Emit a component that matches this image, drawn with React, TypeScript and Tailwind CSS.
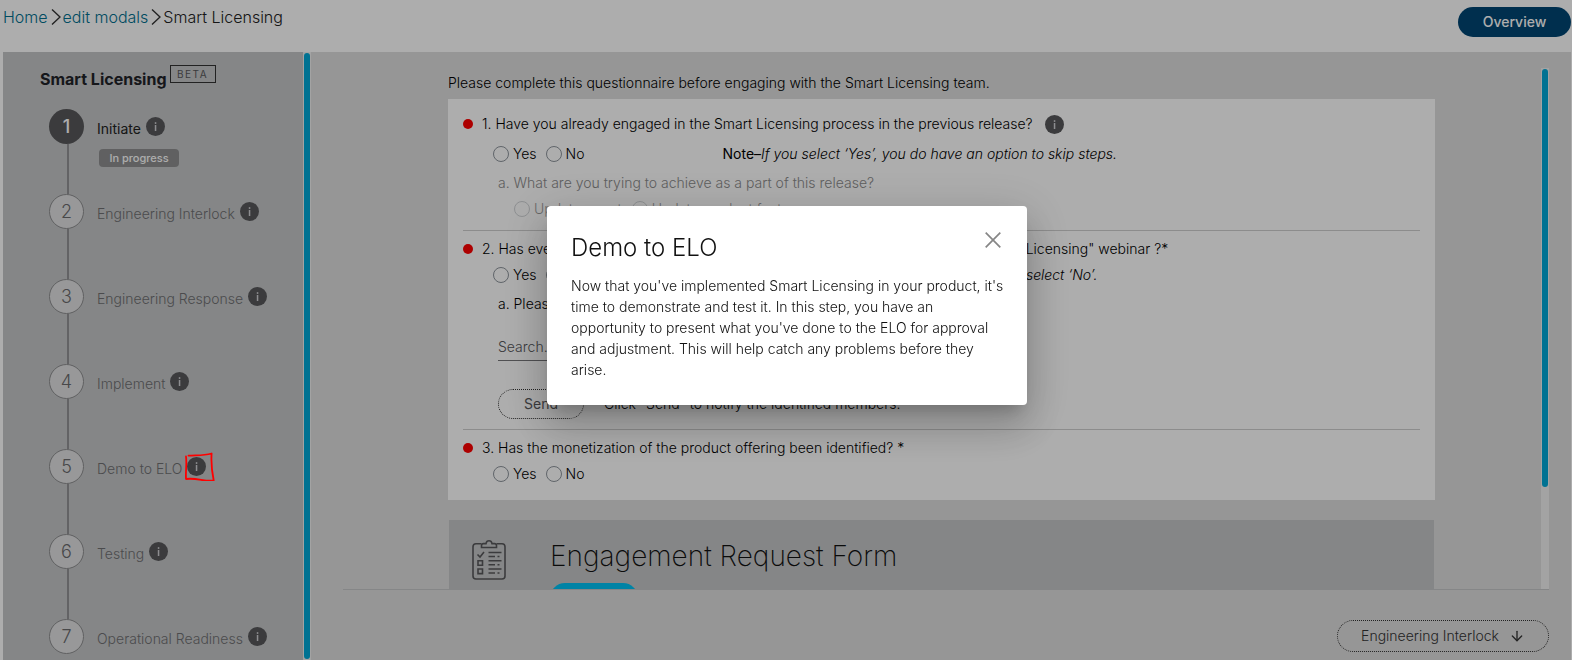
import { ReactNode } from "react";
import { ArrowDown } from "lucide-react";

const steps = [
  "Initiate",
  "Engineering Interlock",
  "Engineering Response",
  "Implement",
  "Demo to ELO",
  "Testing",
  "Operational Readiness",
];

function InfoButton({ label }: { label: string }) {
  return (
    <button type="button" aria-label={`About ${label}`} className="size-[19px] shrink-0 rounded-full">
      <svg viewBox="0 0 19 19" className="block size-full" aria-hidden="true">
        <circle cx="9.5" cy="9.5" r="9.5" fill="#58585b" />
        <rect x="8.8" y="5.2" width="1.5" height="1.7" fill="#d0d0d4" />
        <rect x="8.8" y="8" width="1.5" height="6" fill="#d0d0d4" />
      </svg>
    </button>
  );
}

function Chevron() {
  return (
    <svg viewBox="0 0 10 16" className="ml-[3px] mr-[2px] h-4 w-[10px]" aria-hidden="true">
      <path d="M1 0.5 9 8 1 15.5" fill="none" stroke="#333" strokeWidth="1.4" />
    </svg>
  );
}

function Radio({ name, label, disabled }: { name: string; label: string; disabled?: boolean }) {
  return (
    <label className={disabled ? "flex items-center gap-1 opacity-40" : "flex items-center gap-1"}>
      <input
        type="radio"
        name={name}
        disabled={disabled}
        className="size-4 appearance-none rounded-full border border-[#8e959c] checked:border-4"
      />
      {label}
    </label>
  );
}

function Question({ children }: { children: ReactNode }) {
  return (
    <div className="flex h-[26px] items-center">
      <span className="mr-[9px] size-[10px] rounded-full bg-[#ff0000]" />
      {children}
    </div>
  );
}

function Clipboard() {
  return (
    <svg viewBox="0 0 34 40" className="h-10 w-[34px]" fill="none" stroke="#58585b" strokeWidth="1.6" aria-hidden="true">
      <path d="M9.5 3.7H4a3 3 0 0 0-3 3V36a3 3 0 0 0 3 3h26a3 3 0 0 0 3-3V6.7a3 3 0 0 0-3-3h-5.5" />
      <path d="M9.5 7.5V5.5a2 2 0 0 1 2-1.9H14C14.3 1.8 15.4.8 17 .8s2.7 1 3 2.800h2.500a2 2 0 0 1 2 1.900v2z" />
      <path d="M5.500 14.500 8 17l4-5" />
      <path d="M16.500 12.500h13M16.500 16.500h6.500M25.500 16.500h2M16.500 20.800h13M16.500 24.800h6.500M25.500 24.800h2M16.500 29h13M16.500 33h6.500M25.500 33h2" />
      <path d="M6 20.700h4.500v4.600H6zM6 29h4.500v4.600H6z" />
    </svg>
  );
}

export default function App() {
  return (
    <div className="relative flex h-screen flex-col overflow-hidden bg-white font-['Inter',sans-serif] text-[14px] leading-5 text-black">
      <header className="flex h-[52px] shrink-0 items-start justify-between pl-[3px] pr-px">
        <nav aria-label="Breadcrumb" className="flex h-[34px] items-center text-[16px] font-light text-[#222]">
          <a href="#home" className="text-[#007090]">Home</a>
          <Chevron />
          <a href="#modals" className="text-[#007090]">edit modals</a>
          <Chevron />
          <span>Smart Licensing</span>
        </nav>
        <button type="button" className="mt-[7px] h-[30px] w-[113px] rounded-full bg-[#004674] font-medium text-white">
          Overview
        </button>
      </header>

      <div className="flex min-h-0 flex-1 pl-[3px] pr-px">
        <aside className="flex w-[300px] shrink-0 flex-col overflow-hidden bg-[#c4c6c7] pl-[37px] pt-[13px]">
          <div className="flex h-11 shrink-0 gap-[3px]">
            <h1 className="pt-1 text-[16px] font-bold text-[#1f2328]">Smart Licensing</h1>
            <span className="flex h-[18px] w-[46px] items-center justify-center border border-[#333] text-[10px] tracking-[1.5px] text-[#58585b]">
              BETA
            </span>
          </div>
          <ol className="pl-[9px]">
            {steps.map((step, i) => (
              <li key={step} className="flex h-[85px] gap-[13px]">
                <div className="flex w-[35px] flex-col items-center">
                  <span
                    className={
                      i === 0
                        ? "flex size-[35px] shrink-0 items-center justify-center rounded-full bg-[#58585b] text-[18px] font-medium text-white"
                        : "flex size-[35px] shrink-0 items-center justify-center rounded-full border border-[#8e8e90] bg-[#e0e1e2] text-[18px] font-light text-[#6a6a6d]"
                    }
                  >
                    {i + 1}
                  </span>
                  {i < steps.length - 1 && <span className="ml-[2px] w-[2px] flex-1 bg-[#929295]" />}
                </div>
                <div>
                  <div className="flex gap-[5px] pt-2">
                    <span className={i === 0 ? "pt-[2px] text-[#222]" : "pt-[2px] font-light text-[#6f6f72]"}>{step}</span>
                    <InfoButton label={step} />
                  </div>
                  {i === 0 && (
                    <span className="ml-[2px] mt-[10px] flex h-[18px] w-20 items-center justify-center rounded bg-[#8e8e90] text-[11px] font-medium text-white">
                      In progress
                    </span>
                  )}
                </div>
              </li>
            ))}
          </ol>
        </aside>
        <div className="w-2 shrink-0 bg-[#f1f1f1] p-px">
          <div className="h-full rounded-full bg-[#00a9d7]" />
        </div>

        <main className="flex min-w-0 flex-1 flex-col bg-[#dedede] pl-8 pr-[22px] pt-4 font-light">
          <div className="flex h-[522px] shrink-0 border-b border-[#c4c6c7]">
            <div className="min-w-0 flex-1 overflow-hidden pl-[105px] pr-[106px]">
              <p className="h-[31px] pt-[5px]">
                Please complete this questionnaire before engaging with the Smart Licensing team.
              </p>
              <section className="bg-white px-[15px] pb-[13px] pt-3">
                <Question>
                  <span className="mr-3">1. Have you already engaged in the Smart Licensing process in the previous release?</span>
                  <InfoButton label="the previous release" />
                </Question>
                <div className="flex h-[34px] items-center gap-[9px] pl-[30px]">
                  <Radio name="engaged" label="Yes" />
                  <Radio name="engaged" label="No" />
                  <p className="ml-[129px]">
                    <b>Note–</b>
                    <i>If you select ‘Yes’, you do have an option to skip steps.</i>
                  </p>
                </div>
                <p className="flex h-6 items-center pl-[35px] text-[#8c8c8c]">
                  a. What are you trying to achieve as a part of this release?
                </p>
                <div className="flex h-7 items-center gap-[10px] pl-[51px]">
                  <Radio name="goal" label="Update agent" disabled />
                  <Radio name="goal" label="Update product features" disabled />
                </div>
                <hr className="mt-[7px] border-[#cfcfcf]" />
                <div className="pt-[5px]">
                  <Question>
                    2. Has everyone on your engineering team viewed the "Introduction to Cisco Smart Licensing" webinar ?*
                  </Question>
                </div>
                <div className="flex h-[26px] items-center gap-[9px] pl-[30px]">
                  <Radio name="webinar" label="Yes" />
                  <Radio name="webinar" label="No" />
                  <p className="ml-[129px]">
                    <b>Note–</b>
                    <i>If anyone has not attended it yet, please select ‘No’.</i>
                  </p>
                </div>
                <label htmlFor="members" className="flex h-8 items-center pl-[35px]">
                  a. Please identify the members who should attend.
                </label>
                <div className="pl-[35px] pt-[13px]">
                  <input
                    id="members"
                    type="text"
                    placeholder="Search..."
                    className="block h-7 w-[300px] border-b border-[#77777a] placeholder:text-[#58585b]"
                  />
                </div>
                <div className="flex items-center gap-5 pl-[35px] pt-7">
                  <button type="button" className="h-[30px] w-[86px] rounded-full border border-dotted border-[#333] font-normal text-[#58585b]">
                    Send
                  </button>
                  <p>Click "Send" to notify the identified members.</p>
                </div>
                <hr className="mt-[10px] border-[#cfcfcf]" />
                <div className="pt-[5px]">
                  <Question>3. Has the monetization of the product offering been identified? *</Question>
                </div>
                <div className="flex h-[26px] items-center gap-[9px] pl-[30px]">
                  <Radio name="monetization" label="Yes" />
                  <Radio name="monetization" label="No" />
                </div>
              </section>
              <section className="mx-px mt-5 flex h-40 gap-11 bg-[#c4c6c7] pl-[23px] pt-5">
                <Clipboard />
                <div>
                  <h2 className="text-[28px] font-extralight leading-8 text-[#111]">Engagement Request Form</h2>
                  <button type="button" aria-label="Open form" className="mt-[11px] h-[30px] w-[88px] rounded-full bg-[#00c2f3]" />
                </div>
              </section>
            </div>
            <div className="w-2 shrink-0 bg-[#f1f1f1] p-px">
              <div className="h-[418px] rounded-full bg-[#00a9d7]" />
            </div>
          </div>
          <div className="flex justify-end pt-[30px]">
            <button
              type="button"
              className="flex h-8 w-[212px] shrink-0 items-center justify-center gap-[10px] rounded-full border border-dotted border-[#333] text-[#333]"
            >
              Engineering Interlock
              <ArrowDown className="size-4" />
            </button>
          </div>
        </main>
      </div>

      <div className="fixed inset-0 flex items-start justify-center bg-black/32 pl-[2px] pt-[206px]">
        <div
          role="dialog"
          aria-modal="true"
          aria-labelledby="dialog-title"
          className="w-[480px] rounded bg-white pb-[25px] pl-6 pr-[18px] pt-6 shadow-[0_11px_15px_-7px_rgba(0,0,0,0.2),0_24px_38px_3px_rgba(0,0,0,0.14),0_9px_46px_8px_rgba(0,0,0,0.12)]"
        >
          <div className="flex items-start justify-between pr-2">
            <h2 id="dialog-title" className="text-[24px] font-light leading-9 text-[#111]">Demo to ELO</h2>
            <button type="button" aria-label="Close" className="mt-[2px]">
              <svg viewBox="0 0 16 16" className="block size-4" aria-hidden="true">
                <path d="M.7.7l14.600 14.600M15.300.7.7 15.300" fill="none" stroke="#868686" strokeWidth="1.700" />
              </svg>
            </button>
          </div>
          <p className="pt-[9px] font-light leading-[21px] text-[#111]">
            Now that you've implemented Smart Licensing in your product, it's time to demonstrate and test it. In this
            step, you have an opportunity to present what you've done to the ELO for approval and adjustment. This will
            help catch any problems before they arise.
          </p>
        </div>
      </div>

      <svg viewBox="0 0 30 29" className="absolute left-[185px] top-[452px] h-[29px] w-[30px]" aria-hidden="true">
        <path
          d="M3.500 3.700C10 3 18 4 26.600 1.500 26 10 27 20 28.700 28.500 20 30 12 25.500 1 27 .5 19 2 12 1 4.500"
          fill="none"
          stroke="#ff0000"
          strokeWidth="1.800"
          strokeLinecap="round"
          strokeLinejoin="round"
        />
      </svg>
    </div>
  );
}
